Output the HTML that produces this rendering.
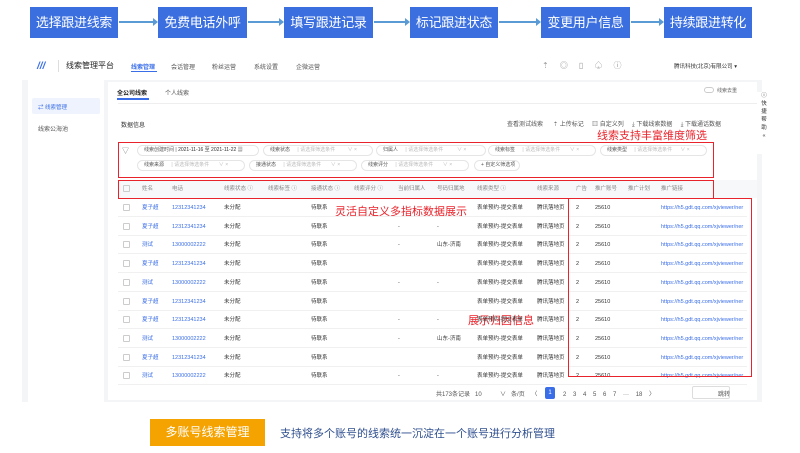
<!DOCTYPE html>
<html><head><meta charset="utf-8"><style>
*{margin:0;padding:0;box-sizing:border-box}
body{width:800px;height:453px;background:#fff;font-family:"Liberation Sans","Noto Sans CJK SC",sans-serif;position:relative;overflow:hidden;color:#333}
.a{position:absolute;white-space:nowrap}
.step{position:absolute;top:7px;height:31px;background:#3b6fe0;color:#fff;font-size:13px;line-height:31px;text-align:center;white-space:nowrap;letter-spacing:-0.3px}
.arr{position:absolute;top:21px;height:2px;background:#5b9bd5}
.arr:after{content:"";position:absolute;right:-2px;top:-3px;border-left:5px solid #5b9bd5;border-top:4px solid transparent;border-bottom:4px solid transparent}
.s{font-size:6px;color:#555}
.blue{color:#3a6ee8}
.red{position:absolute;border:1.5px solid #e8232b}
.rt{position:absolute;color:#e8232b;font-size:11px;white-space:nowrap}
.chip{position:absolute;height:11px;border:1px solid #e5e5e5;border-radius:6px;font-size:5px;line-height:9px;padding-left:6px;color:#555;background:#fff;white-space:nowrap;overflow:hidden}
.chip i{font-style:normal;color:#bbb;margin-left:6px}
.row{position:absolute;left:118px;width:629px;height:18px;border-bottom:1px solid #f0f0f0;font-size:5.5px}
.row span{position:absolute;top:5px;line-height:8px;height:8px;white-space:nowrap}
.cb{position:absolute;left:5px;top:5px;width:7px;height:7px;border:1px solid #ccc;border-radius:1px}
</style></head><body>
<div class="step" style="left:30px;width:88px">选择跟进线索</div>
<div class="arr" style="left:119px;width:37px"></div>
<div class="step" style="left:158px;width:89px">免费电话外呼</div>
<div class="arr" style="left:248px;width:34px"></div>
<div class="step" style="left:284px;width:89px">填写跟进记录</div>
<div class="arr" style="left:374px;width:34px"></div>
<div class="step" style="left:410px;width:88px">标记跟进状态</div>
<div class="arr" style="left:499px;width:40px"></div>
<div class="step" style="left:541px;width:89px">变更用户信息</div>
<div class="arr" style="left:631px;width:31px"></div>
<div class="step" style="left:664px;width:88px">持续跟进转化</div>

<div class="a" style="left:37px;top:61px;font-size:10px;font-weight:bold;color:#3a6ee8;font-style:italic">///</div>
<div class="a" style="left:58px;top:60px;width:1px;height:12px;background:#ddd"></div>
<div class="a" style="left:66px;top:60px;font-size:8px;color:#222">线索管理平台</div>
<div class="a blue" style="left:131px;top:62px;font-size:6px;font-weight:bold">线索管理</div>
<div class="a blue" style="left:131px;top:71px;width:26px;height:1px;background:#3a6ee8"></div>
<div class="a s" style="left:171px;top:62px">会话管理</div>
<div class="a s" style="left:212px;top:62px">粉丝运营</div>
<div class="a s" style="left:254px;top:62px">系统设置</div>
<div class="a s" style="left:296px;top:62px">企微运营</div>
<div class="a" style="left:542px;top:60px;font-size:8px;color:#999">⇡&nbsp;&nbsp;&nbsp;&nbsp;&nbsp;◎&nbsp;&nbsp;&nbsp;&nbsp;&nbsp;▯&nbsp;&nbsp;&nbsp;&nbsp;&nbsp;♤&nbsp;&nbsp;&nbsp;&nbsp;&nbsp;ⓘ</div>
<div class="a" style="left:674px;top:62px;font-size:5.5px;color:#333">腾讯科技(北京)有限公司 ▾</div>

<div class="a" style="left:22px;top:80px;width:740px;height:322px;background:#f4f5f7"></div>
<div class="a" style="left:28px;top:80px;width:76px;height:322px;background:#fff"></div>
<div class="a" style="left:32px;top:98px;width:68px;height:16px;background:#eef3fd;border-radius:2px"></div>
<div class="a blue" style="left:38px;top:103px;font-size:5.5px">⇄ 线索管理</div>
<div class="a s" style="left:38px;top:124px">线索公海池</div>
<div class="a" style="left:108px;top:82px;width:649px;height:318px;background:#fff"></div>
<div class="a" style="left:117px;top:88px;font-size:6px;font-weight:bold;color:#222">全公司线索</div>
<div class="a" style="left:117px;top:98px;width:32px;height:1.5px;background:#3a6ee8"></div>
<div class="a s" style="left:165px;top:88px">个人线索</div>
<div class="a" style="left:704px;top:87px;width:10px;height:6px;border:1px solid #ccc;border-radius:3px"></div>
<div class="a" style="left:717px;top:87px;font-size:5px;color:#666">线索去重</div>
<div class="a" style="left:118px;top:103px;width:639px;height:1px;background:#eee"></div>
<div class="a" style="left:757px;top:92px;width:14px;height:62px;background:#fff;font-size:5.5px;line-height:8px;text-align:center;color:#333">ⓘ<br>快<br>捷<br>帮<br>助<br>«</div>

<div class="a" style="left:121px;top:120px;font-size:6px;color:#333">数据信息</div>
<div class="a s" style="left:507px;top:119px">查看测试线索 &nbsp;&nbsp;&nbsp;&nbsp; ⇡ 上传标记 &nbsp;&nbsp;&nbsp; ▥ 自定义列 &nbsp;&nbsp;&nbsp; ⤓ 下载线索数据 &nbsp;&nbsp;&nbsp; ⤓ 下载通话数据</div>
<div class="rt" style="left:597px;top:127px">线索支持丰富维度筛选</div>

<div class="a" style="left:122px;top:146px;font-size:7px;color:#777">▽</div>
<div class="chip" style="left:137px;top:145px;width:122px">线索创建时间 | <b style="font-weight:normal;color:#333">2021-11-16 至 2021-11-22</b> ▦</div>
<div class="chip" style="left:263px;top:145px;width:110px">线索状态 <i>| 请选择筛选条件 &nbsp;&nbsp;&nbsp;&nbsp;&nbsp;&nbsp;&nbsp;&nbsp;∨ ×</i></div>
<div class="chip" style="left:376px;top:145px;width:110px">归属人 <i>| 请选择筛选条件 &nbsp;&nbsp;&nbsp;&nbsp;&nbsp;&nbsp;&nbsp;&nbsp;&nbsp;∨ ×</i></div>
<div class="chip" style="left:488px;top:145px;width:108px">线索标签 <i>| 请选择筛选条件 &nbsp;&nbsp;&nbsp;&nbsp;&nbsp;&nbsp;∨ ×</i></div>
<div class="chip" style="left:600px;top:145px;width:107px">线索类型 <i>| 请选择筛选条件 &nbsp;&nbsp;&nbsp;&nbsp;&nbsp;∨ ×</i></div>
<div class="chip" style="left:137px;top:160px;width:108px">线索来源 <i>| 请选择筛选条件 &nbsp;&nbsp;&nbsp;&nbsp;&nbsp;&nbsp;∨ ×</i></div>
<div class="chip" style="left:249px;top:160px;width:108px">接通状态 <i>| 请选择筛选条件 &nbsp;&nbsp;&nbsp;&nbsp;&nbsp;&nbsp;∨ ×</i></div>
<div class="chip" style="left:361px;top:160px;width:108px">线索评分 <i>| 请选择筛选条件 &nbsp;&nbsp;&nbsp;&nbsp;&nbsp;&nbsp;∨ ×</i></div>
<div class="chip" style="left:474px;top:160px;width:46px">+ 自定义筛选项</div>
<div class="red" style="left:118px;top:142px;width:596px;height:36px"></div>

<div class="a" style="left:118px;top:180px;width:639px;height:18px;background:#f7f8fa"></div>
<div class="row" style="top:180px;border:none;color:#888">
<div class="cb"></div><span style="left:24px">姓名</span><span style="left:54px">电话</span><span style="left:106px">线索状态 ⓘ</span><span style="left:150px">线索标签 ⓘ</span><span style="left:193px">接通状态 ⓘ</span><span style="left:236px">线索评分 ⓘ</span><span style="left:280px">当前归属人</span><span style="left:319px">号码归属地</span><span style="left:359px">线索类型 ⓘ</span><span style="left:419px">线索来源</span><span style="left:458px">广告</span><span style="left:477px">推广账号</span><span style="left:510px">推广计划</span><span style="left:543px">推广链接</span></div>
<div class="red" style="left:118px;top:180px;width:596px;height:19px"></div>

<div class="rt" style="left:335px;top:203px">灵活自定义多指标数据展示</div>
<div class="rt" style="left:468px;top:312px">展示归因信息</div>

<div id="rows"></div>
<div class="red" style="left:568px;top:198px;width:184px;height:179px"></div>

<div class="a s" style="left:436px;top:389px">共173条记录 &nbsp; 10 &nbsp;&nbsp;&nbsp;&nbsp;&nbsp;&nbsp;&nbsp;&nbsp;&nbsp; ∨ &nbsp; 条/页 &nbsp;&nbsp; 〈</div>
<div class="a" style="left:545px;top:387px;width:10px;height:12px;background:#3a6ee8;border-radius:2px;color:#fff;font-size:6px;text-align:center;line-height:12px">1</div>
<div class="a s" style="left:563px;top:389px">2 &nbsp;&nbsp; 3 &nbsp;&nbsp; 4 &nbsp;&nbsp; 5 &nbsp;&nbsp; 6 &nbsp;&nbsp; 7 &nbsp;&nbsp; ··· &nbsp;&nbsp; 18 &nbsp;&nbsp; 〉</div>
<div class="a" style="left:692px;top:386px;width:38px;height:13px;border:1px solid #ddd;border-radius:2px"></div>
<div class="a s" style="left:718px;top:389px">跳转</div>

<div class="a" style="left:150px;top:419px;width:115px;height:27px;background:#f5a300;color:#fff;font-size:12px;line-height:27px;text-align:center">多账号线索管理</div>
<div class="a" style="left:280px;top:425px;font-size:11px;color:#2f4f8f">支持将多个账号的线索统一沉淀在一个账号进行分析管理</div>

<script>
var d=[["夏子超","12312341234",0],["夏子超","12312341234",1],["测试","13000002222",2],["夏子超","12312341234",0],["测试","13000002222",1],["夏子超","12312341234",0],["夏子超","12312341234",1],["测试","13000002222",2],["夏子超","12312341234",0],["测试","13000002222",1]];
var h="";d.forEach(function(r,i){var t=199+i*18.7;
h+='<div class="row" style="top:'+t+'px"><div class="cb"></div><span class="blue" style="left:24px">'+r[0]+'</span><span class="blue" style="left:54px">'+r[1]+'</span><span style="left:106px">未分配</span><span style="left:193px">待联系</span><span style="left:280px">'+(r[2]?'-':'')+'</span><span style="left:319px">'+(r[2]==2?'山东-济南':(r[2]?'-':''))+'</span><span style="left:359px">表单预约-提交表单</span><span style="left:419px">腾讯落地页</span><span style="left:458px">2</span><span style="left:477px">25610</span><span class="blue" style="left:543px">https://h5.gdt.qq.com/xjviewer/ner</span></div>';});
document.getElementById("rows").innerHTML=h;
</script>
</body></html>
